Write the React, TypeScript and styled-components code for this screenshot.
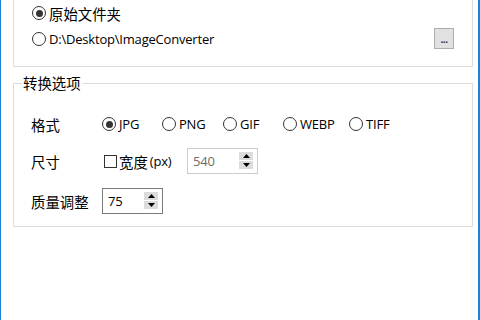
import React from "react";
import styled, { createGlobalStyle } from "styled-components";

const Global = createGlobalStyle`
  html, body { margin: 0; padding: 0; background: #ffffff; }
  body {
    font-family: "Open Sans", "Noto Sans CJK SC", sans-serif;
    font-size: 13px;
    letter-spacing: -0.2px;
    color: #000000;
  }
  * { box-sizing: border-box; }
`;

const Window = styled.div`
  width: 480px;
  height: 320px;
  overflow: hidden;
  background: #ffffff;
  border-left: 1px solid #1883d7;
  border-right: 2px solid #1883d7;
  padding: 0 5px 0 12px;
  display: flex;
  flex-direction: column;
`;

const Han = styled.span`
  font-family: "Noto Sans CJK SC", sans-serif;
  font-size: 14.4px;
  letter-spacing: 0;
`;

const OpenGroup = styled.div`
  height: 67px;
  border: 1px solid #dcdcdc;
  border-top: none;
  padding: 0 18px 0 18px;
  display: flex;
  flex-direction: column;
`;

const Group = styled.fieldset`
  margin: 7px 0 0 0;
  padding: 0 0 12px 0;
  min-width: 0;
  border: 1px solid #dcdcdc;
  display: flex;
  flex-direction: column;
`;

const Legend = styled.legend`
  margin-left: 8px;
  padding: 0 1px;
  line-height: 18px;
  height: 18px;
  display: flex;
  align-items: center;
`;

const PathRow = styled.div<{ $h: number }>`
  height: ${(p) => p.$h}px;
  display: flex;
  align-items: center;
`;

const Spacer = styled.div`
  flex: 1;
`;

const BrowseButton = styled.button`
  width: 20px;
  height: 21px;
  margin: 0;
  padding: 0 0 4px 0;
  border: 1px solid #adadad;
  background: #e1e1e1;
  font-family: "Open Sans", sans-serif;
  font-size: 10px;
  font-weight: 700;
  color: #333;
  line-height: 1;
  display: flex;
  align-items: flex-end;
  justify-content: center;
  letter-spacing: -0.5px;
`;

const Row = styled.div<{ $top: number }>`
  height: 26px;
  margin-top: ${(p) => p.$top}px;
  padding-left: 17px;
  display: flex;
  align-items: center;
`;

const FieldLabel = styled.div`
  width: 71px;
  flex: none;
  display: flex;
  align-items: center;
`;

const RadioItem = styled.label<{ $w?: number }>`
  ${(p) => (p.$w ? `width: ${p.$w}px;` : "")}
  flex: none;
  display: flex;
  align-items: center;
  gap: 3px;
  white-space: nowrap;
`;

const RadioCircle = styled.span<{ $on?: boolean }>`
  width: 14px;
  height: 14px;
  border: 1px solid #333333;
  border-radius: 50%;
  background: #ffffff;
  flex: none;
  display: flex;
  align-items: center;
  justify-content: center;
  &::after {
    content: "";
    width: 7px;
    height: 7px;
    border-radius: 50%;
    background: ${(p) => (p.$on ? "#333333" : "transparent")};
  }
`;

const CheckItem = styled.label`
  width: 83px;
  flex: none;
  margin-left: 2px;
  display: flex;
  align-items: center;
  gap: 2px;
  white-space: nowrap;
`;

const CheckBox = styled.span`
  width: 13px;
  height: 13px;
  border: 1px solid #333333;
  background: #ffffff;
  flex: none;
`;

const Spin = styled.div<{ $w: number; $disabled?: boolean }>`
  width: ${(p) => p.$w}px;
  height: 26px;
  border: 1px solid ${(p) => (p.$disabled ? "#cccccc" : "#7a7a7a")};
  background: #ffffff;
  padding: 3px 4px 4px 4px;
  display: flex;
  align-items: stretch;
  color: ${(p) => (p.$disabled ? "#6d6d6d" : "#000000")};
`;

const SpinValue = styled.div`
  flex: 1;
  display: flex;
  align-items: center;
  padding-left: 1px;
`;

const SpinButtons = styled.div`
  width: 14px;
  display: flex;
  flex-direction: column;
  gap: 1px;
`;

const SpinBtn = styled.div`
  flex: 1;
  background: #dcdcdc;
  display: flex;
  align-items: center;
  justify-content: center;
`;

const Arrow = ({ up }: { up?: boolean }) => (
  <svg width="7" height="4" viewBox="0 0 7 4">
    <polygon points={up ? "0,4 7,4 3.5,0" : "0,0 7,0 3.5,4"} fill="#000" />
  </svg>
);

const Spinner = ({ value, w, disabled }: { value: string; w: number; disabled?: boolean }) => (
  <Spin $w={w} $disabled={disabled}>
    <SpinValue>{value}</SpinValue>
    <SpinButtons>
      <SpinBtn>
        <Arrow up />
      </SpinBtn>
      <SpinBtn>
        <Arrow />
      </SpinBtn>
    </SpinButtons>
  </Spin>
);

const formats: { name: string; w: number; on?: boolean }[] = [
  { name: "JPG", w: 60, on: true },
  { name: "PNG", w: 61 },
  { name: "GIF", w: 60 },
  { name: "WEBP", w: 66 },
  { name: "TIFF", w: 50 },
];

export default function App() {
  return (
    <>
      <Global />
      <Window>
        <OpenGroup>
          <PathRow $h={26}>
            <RadioItem>
              <RadioCircle $on />
              <Han>原始文件夹</Han>
            </RadioItem>
          </PathRow>
          <PathRow $h={25}>
            <RadioItem>
              <RadioCircle />
              <span>D:\Desktop\ImageConverter</span>
            </RadioItem>
            <Spacer />
            <BrowseButton>...</BrowseButton>
          </PathRow>
        </OpenGroup>

        <Group>
          <Legend>
            <Han>转换选项</Han>
          </Legend>
          <Row $top={19}>
            <FieldLabel>
              <Han>格式</Han>
            </FieldLabel>
            {formats.map((f) => (
              <RadioItem key={f.name} $w={f.w}>
                <RadioCircle $on={f.on} />
                <span>{f.name}</span>
              </RadioItem>
            ))}
          </Row>
          <Row $top={11}>
            <FieldLabel>
              <Han>尺寸</Han>
            </FieldLabel>
            <CheckItem>
              <CheckBox />
              <Han>宽度</Han>
              <span>(px)</span>
            </CheckItem>
            <Spinner value="540" w={71} disabled />
          </Row>
          <Row $top={14}>
            <FieldLabel>
              <Han>质量调整</Han>
            </FieldLabel>
            <Spinner value="75" w={61} />
          </Row>
        </Group>
      </Window>
    </>
  );
}
